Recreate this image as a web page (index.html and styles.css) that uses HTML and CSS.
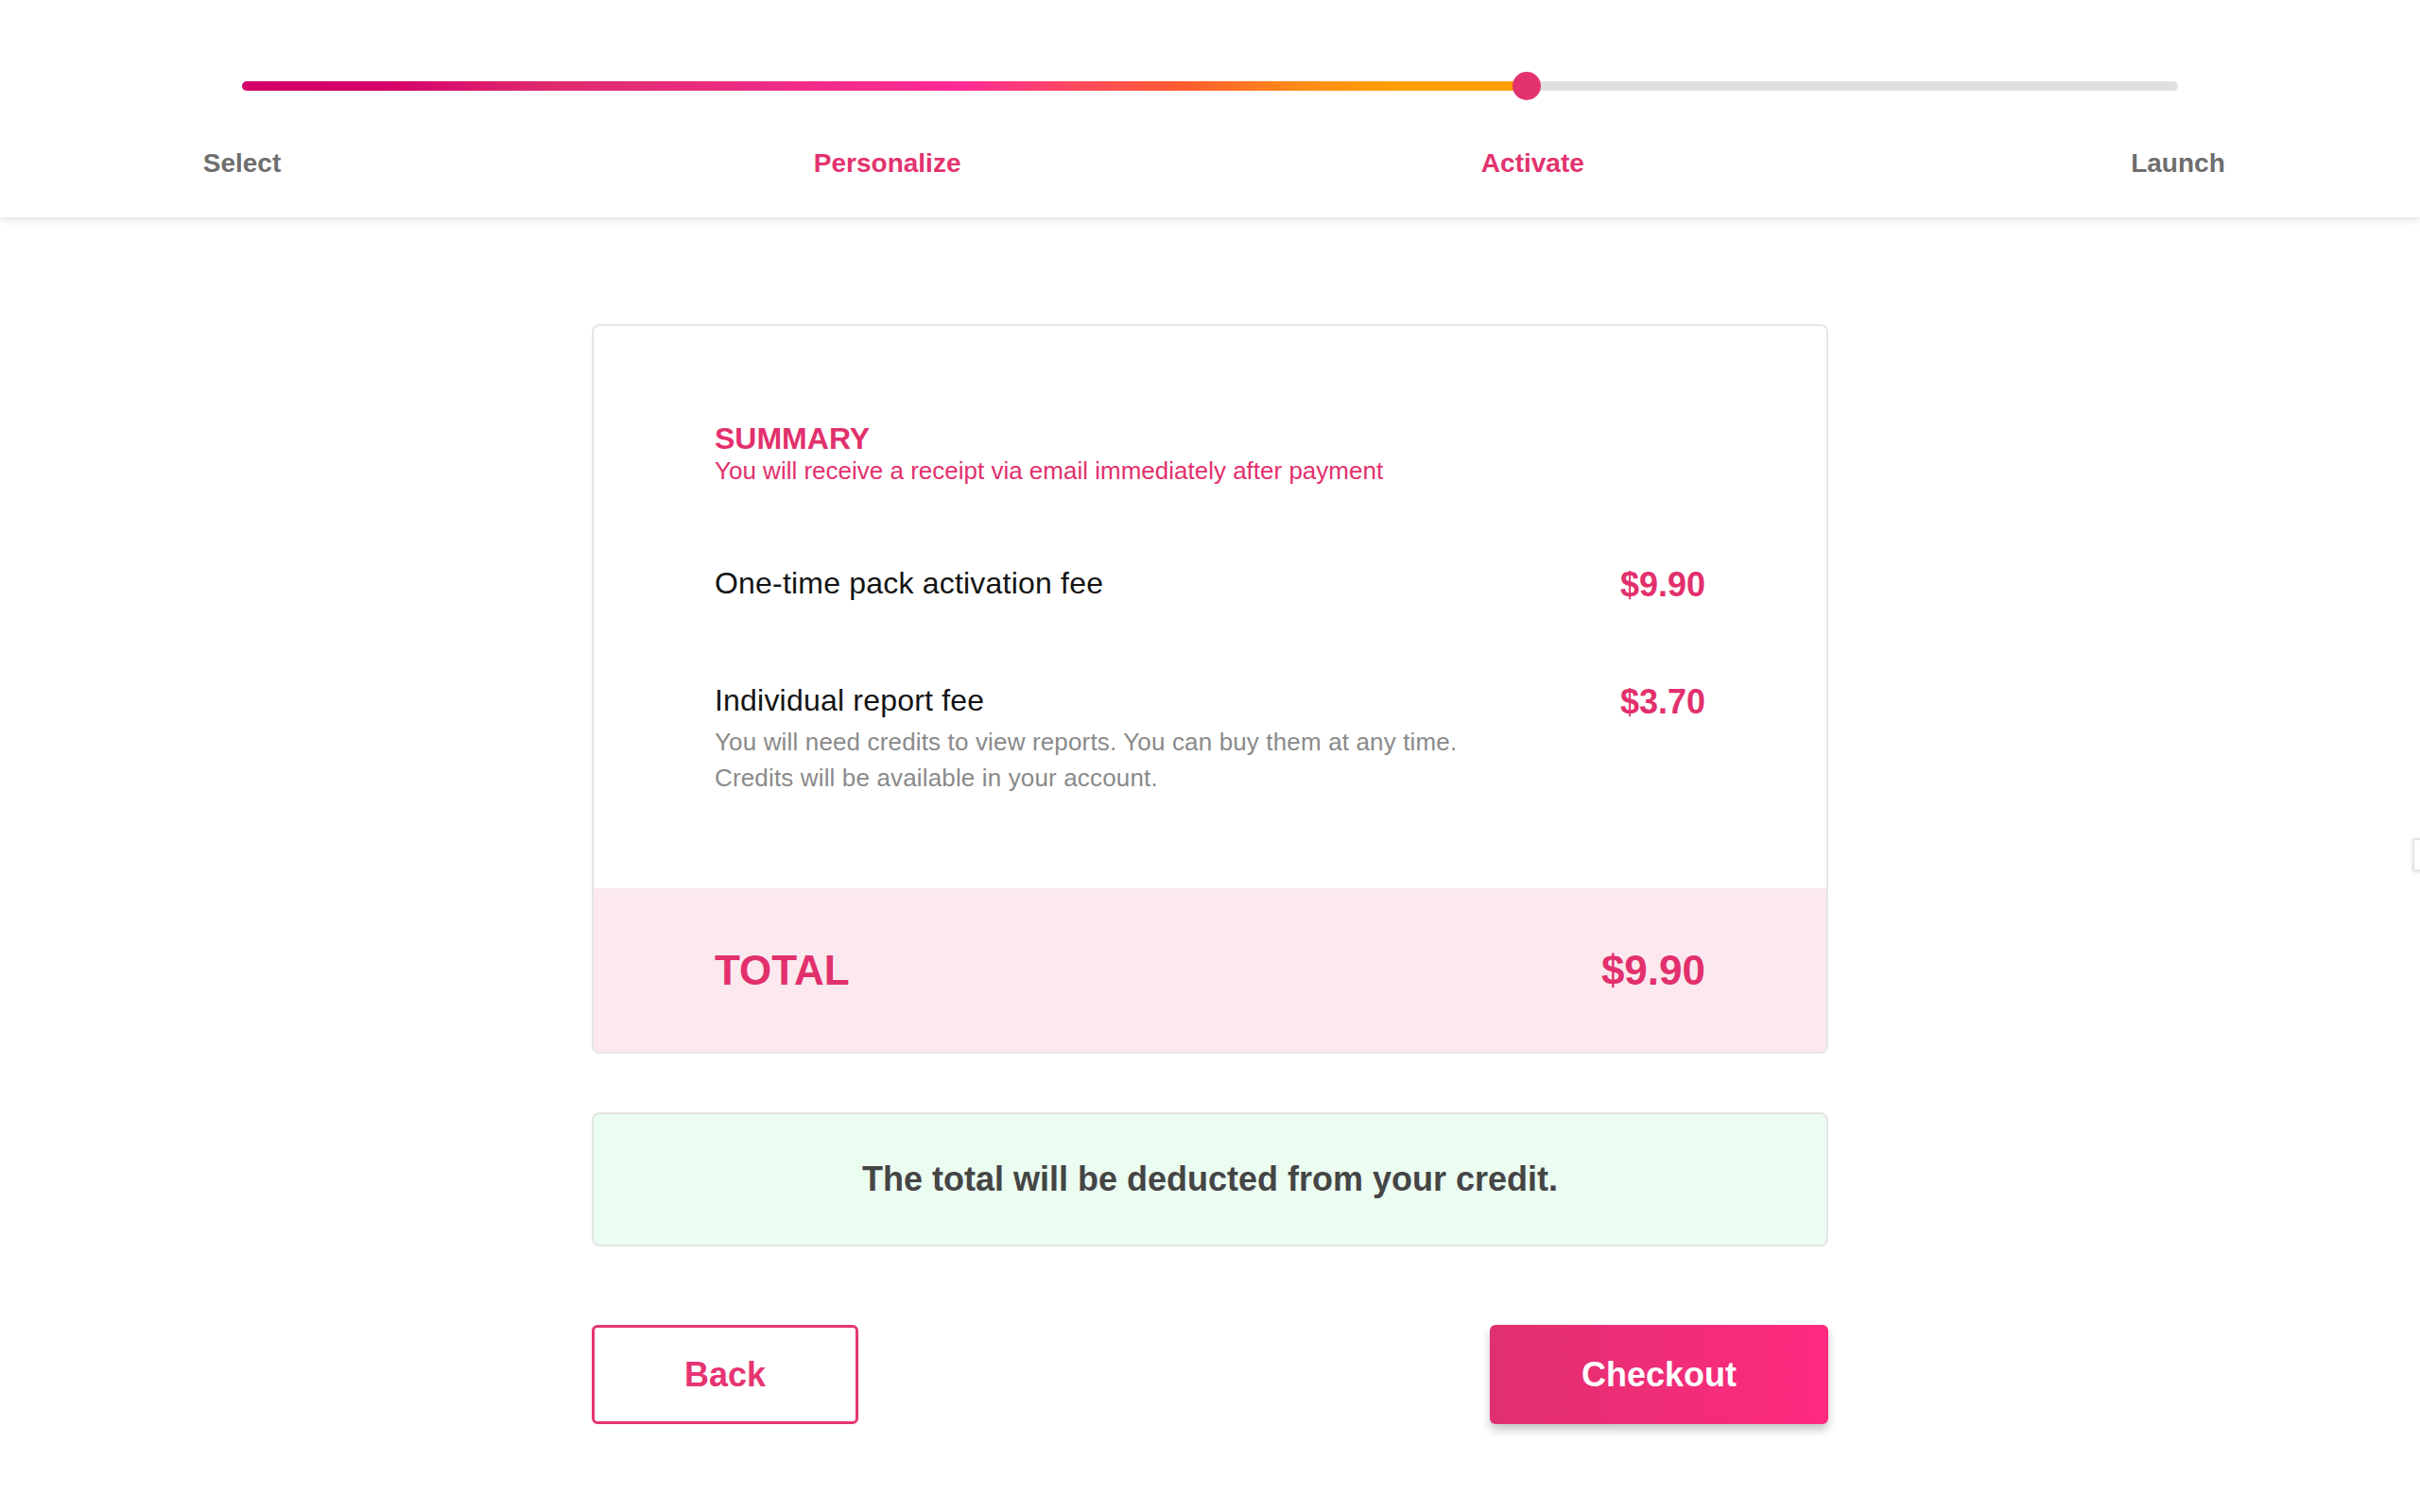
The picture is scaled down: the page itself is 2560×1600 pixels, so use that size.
FILE: index.html
```html
<!DOCTYPE html>
<html lang="en">
<head>
<meta charset="utf-8">
<title>Activate - Summary</title>
<link rel="stylesheet" href="styles.css">
</head>
<body>
<header class="stepper">
  <div class="stepper-inner">
    <div class="track">
      <div class="track-fill" style="width: 66.36%"></div>
      <div class="track-handle" style="left: 66.36%"></div>
    </div>
    <div class="steps">
      <div class="step"><span>Select</span></div>
      <div class="step step-active"><span>Personalize</span></div>
      <div class="step step-active"><span>Activate</span></div>
      <div class="step"><span>Launch</span></div>
    </div>
  </div>
</header>

<main class="main">
  <section class="card">
    <div class="card-body">
      <div class="summary-head">
        <h2 class="summary-title">SUMMARY</h2>
        <p class="summary-sub">You will receive a receipt via email immediately after payment</p>
      </div>
      <div class="item item-first">
        <div class="item-text">
          <div class="item-title">One-time pack activation fee</div>
        </div>
        <div class="item-price">$9.90</div>
      </div>
      <div class="item item-second">
        <div class="item-text">
          <div class="item-title">Individual report fee</div>
          <p class="item-desc">You will need credits to view reports. You can buy them at any time.<br>Credits will be available in your account.</p>
        </div>
        <div class="item-price">$3.70</div>
      </div>
    </div>
    <div class="total">
      <span class="total-label">TOTAL</span>
      <span class="total-amount">$9.90</span>
    </div>
  </section>

  <div class="notice">The total will be deducted from your credit.</div>

  <div class="actions">
    <button class="btn btn-back" type="button">Back</button>
    <button class="btn btn-checkout" type="button">Checkout</button>
  </div>
</main>

<div class="edge-tab"></div>
</body>
</html>
```
FILE: styles.css
```css
html, body {
  margin: 0;
  padding: 0;
  background: #ffffff;
}

body {
  font-family: "Liberation Sans", Arial, Helvetica, sans-serif;
  color: #1a1a1a;
  min-height: 1600px;
  overflow: hidden;
}

/* ---------- Stepper header ---------- */
.stepper {
  height: 230px;
  background: #ffffff;
  box-shadow: 0 2px 8px rgba(0, 0, 0, 0.14);
  position: relative;
  z-index: 1;
}

.stepper-inner {
  width: 2048px;
  margin: 0 auto;
  padding-top: 86px;
}

.track {
  position: relative;
  height: 10px;
  border-radius: 5px;
  background: #e0e0e0;
}

.track-fill {
  height: 10px;
  border-radius: 5px 0 0 5px;
  background: linear-gradient(to right,
    #d4006a 0%,
    #d5006a 11%,
    #df2b6e 24%,
    #ec2d84 40%,
    #ff2a97 56%,
    #ff4a5e 65%,
    #ff5b30 73%,
    #ff8a18 82%,
    #ffa000 90%,
    #ffa000 100%);
}

.track-handle {
  position: absolute;
  top: 50%;
  width: 30px;
  height: 30px;
  margin: -15px 0 0 -15px;
  border-radius: 50%;
  background: #e2336f;
}

.steps {
  display: flex;
  justify-content: space-between;
  margin-top: 61px;
}

.step {
  width: 0;
  display: flex;
  justify-content: center;
  white-space: nowrap;
  font-size: 28px;
  line-height: 32px;
  font-weight: 700;
  color: #6e6e6e;
}

.step-active {
  color: #e2336f;
}

/* ---------- Main ---------- */
.main {
  width: 1308px;
  margin: 0 auto;
  padding-top: 113px;
}

.card {
  border: 2px solid #e6e6e6;
  border-radius: 8px;
  overflow: hidden;
  background: #ffffff;
}

.card-body {
  padding: 101px 128px 98px 128px;
}

.summary-title {
  margin: 0;
  font-size: 32px;
  line-height: 36px;
  font-weight: 700;
  color: #e2306d;
}

.summary-sub {
  margin: 0;
  font-size: 26px;
  line-height: 32px;
  color: #e2306d;
}

.item {
  display: flex;
  justify-content: space-between;
  align-items: flex-start;
}

.item-first {
  margin-top: 83px;
}

.item-second {
  margin-top: 80px;
}

.item-title {
  font-size: 32px;
  line-height: 40px;
  color: #141414;
  letter-spacing: 0.2px;
}

.item-desc {
  margin: 5px 0 0 0;
  font-size: 26px;
  line-height: 38px;
  color: #8a8a8a;
  letter-spacing: 0.15px;
}

.item-price {
  font-size: 36px;
  line-height: 44px;
  font-weight: 700;
  color: #e2306d;
}

.total {
  height: 173px;
  padding: 0 128px;
  display: flex;
  justify-content: space-between;
  align-items: center;
  background: #fbe9ef;
  font-size: 44px;
  font-weight: 700;
  color: #e2306d;
}

/* ---------- Notice ---------- */
.notice {
  margin-top: 62px;
  height: 142px;
  box-sizing: border-box;
  border: 2px solid #e2e4e2;
  border-radius: 8px;
  background: #ebfcf1;
  display: flex;
  align-items: center;
  justify-content: center;
  font-size: 36px;
  font-weight: 700;
  color: #454545;
}

/* ---------- Actions ---------- */
.actions {
  margin-top: 83px;
  display: flex;
  justify-content: space-between;
}

.btn {
  height: 105px;
  box-sizing: border-box;
  padding: 0 95px;
  border-radius: 6px;
  font-family: "Liberation Sans", Arial, Helvetica, sans-serif;
  font-size: 36px;
  font-weight: 700;
  cursor: pointer;
}

.btn-back {
  background: #ffffff;
  border: 3px solid #e63572;
  color: #e63572;
}

.btn-checkout {
  border: none;
  color: #ffffff;
  padding: 0 97px;
  background: linear-gradient(to right, #e0306f 0%, #ff2a80 100%);
  box-shadow: 0 6px 10px rgba(0, 0, 0, 0.22);
}

/* small tab peeking at the right edge */
.edge-tab {
  position: absolute;
  top: 887px;
  right: -22px;
  width: 26px;
  height: 31px;
  border: 2px solid #e4e4e4;
  border-radius: 3px;
  background: #ffffff;
  box-shadow: 0 1px 4px rgba(0, 0, 0, 0.12);
}
```
